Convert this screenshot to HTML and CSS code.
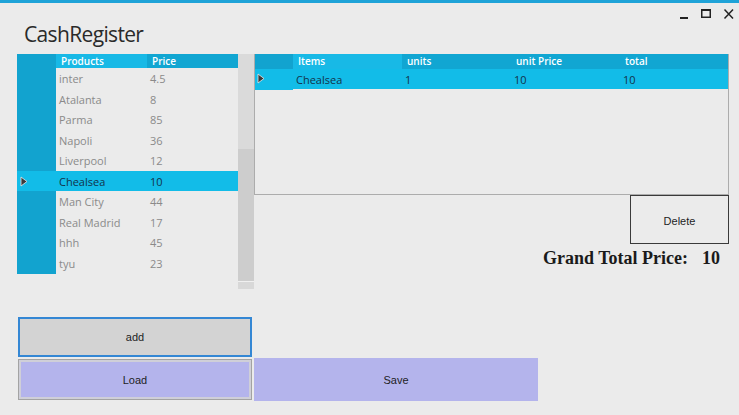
FILE: index.html
```html
<!DOCTYPE html>
<html lang="en">
<head>
<meta charset="utf-8">
<title>CashRegister</title>
<link rel="stylesheet" href="styles.css">
</head>
<body>
<div class="topline"></div>
<header class="head">
  <h1 class="title">CashRegister</h1>
  <div class="winctl">
    <svg width="10" height="12" viewBox="0 0 10 12"><rect x="1" y="9" width="8" height="2" fill="#222"/></svg>
    <svg width="12" height="12" viewBox="0 0 12 12"><rect x="1.75" y="1.75" width="8.5" height="7.5" fill="none" stroke="#222" stroke-width="1.5"/><rect x="1" y="1" width="10" height="2" fill="#222"/></svg>
    <svg width="12" height="12" viewBox="0 0 12 12"><path d="M1.5 1.5 L10 10.5 M10 1.5 L1.5 10.5" stroke="#222" stroke-width="1.5" fill="none"/></svg>
  </div>
</header>
<main class="work">
  <section class="left">
    <div class="pgrid">
      <div class="prow phead"><span class="rh"></span><span class="hc light">Products</span><span class="hc">Price</span></div>
      <div class="prow"><span class="rh"></span><span class="c">inter</span><span class="c">4.5</span></div>
      <div class="prow"><span class="rh"></span><span class="c">Atalanta</span><span class="c">8</span></div>
      <div class="prow"><span class="rh"></span><span class="c">Parma</span><span class="c">85</span></div>
      <div class="prow"><span class="rh"></span><span class="c">Napoli</span><span class="c">36</span></div>
      <div class="prow"><span class="rh"></span><span class="c">Liverpool</span><span class="c">12</span></div>
      <div class="prow sel"><span class="rh"><svg class="arrow" width="8" height="11" viewBox="0 0 8 11"><path d="M1 1 L7 5.5 L1 10 Z" fill="#3a3a3a" stroke="#e8e8e8" stroke-width="0.8"/></svg></span><span class="c">Chealsea</span><span class="c">10</span></div>
      <div class="prow"><span class="rh"></span><span class="c">Man City</span><span class="c">44</span></div>
      <div class="prow"><span class="rh"></span><span class="c">Real Madrid</span><span class="c">17</span></div>
      <div class="prow"><span class="rh"></span><span class="c">hhh</span><span class="c">45</span></div>
      <div class="prow"><span class="rh"></span><span class="c">tyu</span><span class="c">23</span></div>
    </div>
    <div class="vscroll">
      <div class="track"></div>
      <div class="thumb"></div>
      <div class="tail"></div>
    </div>
  </section>
  <section class="right">
    <div class="igrid">
      <div class="irow ihead"><span class="rh"></span><span class="hc light">Items</span><span class="hc">units</span><span class="hc">unit Price</span><span class="hc">total</span></div>
      <div class="irow sel"><span class="rh"><svg class="arrow" width="8" height="11" viewBox="0 0 8 11"><path d="M1 1 L7 5.5 L1 10 Z" fill="#3a3a3a" stroke="#e8e8e8" stroke-width="0.8"/></svg></span><span class="c">Chealsea</span><span class="c">1</span><span class="c">10</span><span class="c">10</span></div>
    </div>
    <button class="btn delete">Delete</button>
    <p class="grand"><span>Grand Total Price:</span><span class="gval">10</span></p>
  </section>
</main>
<section class="actions">
  <button class="btn add">add</button>
  <button class="btn load">Load</button>
  <button class="btn save">Save</button>
</section>
</body>
</html>
```
FILE: styles.css
```css
* { box-sizing: border-box; }
html, body { margin: 0; padding: 0; }
body {
  width: 739px;
  height: 415px;
  overflow: hidden;
  background: #ebebeb;
  font-family: "Open Sans", "Noto Sans", sans-serif;
}
.topline { height: 3px; background: #1fa3d8; }
.head {
  display: flex;
  justify-content: space-between;
  align-items: flex-start;
  height: 51px;
}
.title {
  margin: 17px 0 0 24px;
  font-size: 21px;
  font-weight: 400;
  color: #2a2a2a;
  letter-spacing: -0.65px;
  line-height: 28px;
}
.winctl {
  display: flex;
  gap: 11px;
  padding: 5px 4px 0 0;
}
.winctl svg { display: block; }
.work {
  display: flex;
  padding-left: 17px;
}
.left { display: flex; align-items: flex-start; }
.pgrid { width: 221px; }
.prow {
  display: grid;
  grid-template-columns: 39px 91px 91px;
  height: 20.5px;
  font-size: 11px;
  color: #8a8a8a;
}
.prow .c, .irow .c {
  padding: 1px 0 0 3px;
  line-height: 20px;
  white-space: nowrap;
}
.rh { background: #12a3cf; position: relative; }
.phead { height: 14px; }
.hc {
  background: #11a6d2;
  color: #fff;
  font-size: 10px;
  font-weight: 600;
  padding-left: 5px;
  line-height: 14px;
}
.hc.light { background: #18b9e6; }
.sel { background: #12bce8; color: #13334a; }
.sel .rh { background: #12bce8; }
.arrow { position: absolute; left: 3px; top: 5px; }
.vscroll { width: 16px; display: flex; flex-direction: column; }
.track { height: 95px; background: #dadada; }
.thumb { height: 133px; background: #cdcdcd; border-bottom: 1px solid #f0f0f0; }
.tail { height: 7px; background: #d8d8d8; }
.right {
  width: 475px;
  display: flex;
  flex-direction: column;
}
.igrid {
  height: 141px;
  border: 1px solid #acacac;
  border-top: none;
}
.irow {
  display: grid;
  grid-template-columns: 38px 109px 109px 109px 108px;
  height: 20px;
  font-size: 11px;
  color: #13334a;
}
.ihead { height: 15px; }
.ihead .hc { line-height: 15px; }
.irow .arrow { left: 2px; top: 4px; }
.btn {
  font-family: "Liberation Sans", Arial, sans-serif;
  font-size: 11px;
  color: #1e1e1e;
  padding: 0;
  margin: 0;
}
.delete {
  align-self: flex-end;
  width: 99px;
  height: 49px;
  background: #ebebeb;
  border: 1px solid #3a3a3a;
  padding-top: 2px;
}
.grand {
  margin: 4px 9px 0 0;
  align-self: flex-end;
  font-family: "Liberation Serif", "Times New Roman", serif;
  font-weight: 700;
  font-size: 18px;
  line-height: 20px;
  color: #1a1a1a;
  display: flex;
  gap: 14px;
}
.actions {
  display: grid;
  grid-template-columns: 234px 284px;
  grid-template-rows: 40px 43px;
  column-gap: 2px;
  row-gap: 1px;
  margin: 28px 0 0 18px;
}
.add {
  grid-column: 1;
  grid-row: 1;
  background: #d3d3d3;
  border: 2px solid #3487d4;
}
.load {
  grid-column: 1;
  grid-row: 2;
  align-self: center;
  height: 41px;
  background: #b4b4ec;
  border: 1px solid #a3a3a3;
  box-shadow: inset 0 0 0 2px #cfcfd8;
}
.save {
  grid-column: 2;
  grid-row: 2;
  background: #b4b4ec;
  border: none;
}
```
